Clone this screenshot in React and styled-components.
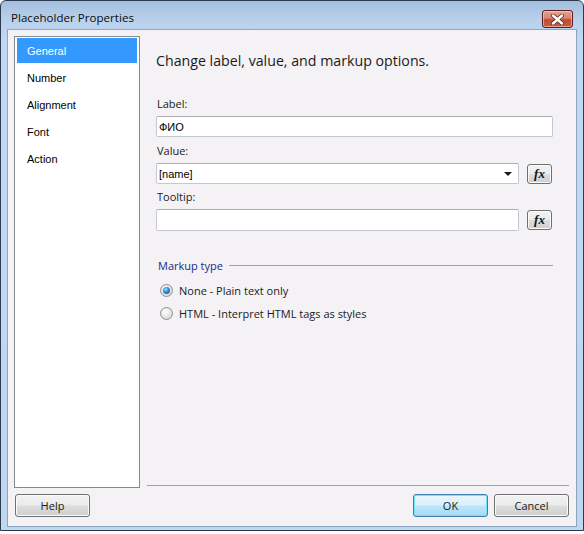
import React from "react";
import styled, { createGlobalStyle } from "styled-components";

const Global = createGlobalStyle`
  html, body { margin: 0; padding: 0; background: #ffffff; }
  body { width: 584px; height: 534px; overflow: hidden; font-family: "Liberation Sans", Arial, sans-serif; }
  * { box-sizing: border-box; }
`;

const Window = styled.div`
  width: 584px;
  height: 531px;
  border: 1px solid #2b3a4e;
  border-radius: 6px 6px 0 0;
  background: linear-gradient(180deg, #a3bfdd 0px, #b9d1ec 20px, #c1d8f1 40px, #c0d7f0 100%);
  display: flex;
  flex-direction: column;
  padding: 0 6px 3px 6px;
`;

const TitleBar = styled.div`
  height: 28px;
  display: flex;
  align-items: center;
  justify-content: space-between;
  padding: 2px 2px 0 4px;
`;

const Title = styled.div`
  font-family: "Open Sans", "Noto Sans", sans-serif;
  font-size: 11.5px;
  color: #0c0c0c;
  letter-spacing: 0.05px;
  margin-top: 3px;
`;

const CloseButton = styled.div`
  width: 31px;
  height: 18px;
  margin-top: 6px;
  margin-right: 2px;
  border: 1px solid #5a1d1d;
  border-radius: 3px;
  background: linear-gradient(180deg, #e6a497 0%, #d8826f 45%, #c24a32 55%, #c95d40 100%);
  box-shadow: inset 0 0 0 1px rgba(255, 220, 210, 0.55);
  display: flex;
  align-items: center;
  justify-content: center;
`;

const Client = styled.div`
  flex: 1;
  background: #f5f2f6;
  border: 1px solid #8fa6c0;
  display: grid;
  grid-template-columns: 126px 1fr;
  grid-template-rows: 1fr auto;
  column-gap: 7px;
  padding: 6px 7px 9px 6px;
`;

const NavList = styled.div`
  background: #ffffff;
  border: 1px solid #848990;
  display: flex;
  flex-direction: column;
  height: 452px;
`;

const NavItem = styled.div`
  height: 27px;
  margin: 0 1px;
  border: ${(p) => (p.$active ? "1px solid #ffffff" : "none")};
  display: flex;
  align-items: center;
  padding-left: ${(p) => (p.$active ? "10px" : "11px")};
  font-family: "Liberation Sans", Arial, sans-serif;
  font-size: 11px;
  color: ${(p) => (p.$active ? "#ffffff" : "#000000")};
  background: ${(p) => (p.$active ? "#3399ff" : "transparent")};
`;

const Content = styled.div`
  display: flex;
  flex-direction: column;
  border-bottom: 1px solid #a0a0a0;
  padding: 15px 16px 0 9px;
  height: 450px;
`;

const Heading = styled.div`
  font-family: "Open Sans", "Noto Sans", sans-serif;
  font-size: 14.2px;
  color: #1a1a1a;
  margin-bottom: 27px;
`;

const FieldLabel = styled.div`
  font-family: "Open Sans", "Noto Sans", sans-serif;
  font-size: 11px;
  color: #1a1a1a;
  margin: 0 0 5px 1px;
  line-height: 14px;
`;

const Row = styled.div`
  display: flex;
  align-items: center;
  gap: 8px;
  margin-bottom: ${(p) => p.$mb || 0}px;
`;

const TextBox = styled.div`
  flex: 1;
  height: ${(p) => p.$h || 21}px;
  background: #ffffff;
  border: 1px solid #c4c8cd;
  border-top-color: #abadb3;
  border-radius: 2px;
  display: flex;
  align-items: center;
  padding: 0 4px 0 2px;
  font-family: "Liberation Sans", Arial, sans-serif;
  font-size: 11px;
  color: #000;
  justify-content: space-between;
`;

const Arrow = styled.div`
  width: 0;
  height: 0;
  border-left: 4px solid transparent;
  border-right: 4px solid transparent;
  border-top: 4px solid #1a1a1a;
  margin-right: 2px;
`;

const FxButton = styled.div`
  width: 25px;
  height: 20px;
  border: 1px solid #707070;
  border-radius: 3px;
  background: linear-gradient(180deg, #f2f2f2 0%, #ebebeb 49%, #dddddd 51%, #cfcfcf 100%);
  box-shadow: inset 0 0 0 1px #fbfbfb;
  display: flex;
  align-items: center;
  justify-content: center;
  font-family: "Liberation Serif", "Times New Roman", serif;
  font-style: italic;
  font-weight: bold;
  font-size: 13px;
  color: #111;
  flex-shrink: 0;
  margin-right: 1px;
`;

const GroupHeader = styled.div`
  display: flex;
  align-items: center;
  gap: 6px;
  margin: 27px 0 9px 2px;
`;

const GroupTitle = styled.div`
  font-family: "Open Sans", "Noto Sans", sans-serif;
  font-size: 11px;
  color: #152a8a;
`;

const GroupLine = styled.div`
  flex: 1;
  height: 1px;
  background: #a0a0a6;
`;

const RadioRow = styled.div`
  display: flex;
  align-items: center;
  gap: 6px;
  margin-left: 4px;
  height: 17px;
  margin-bottom: 6px;
  font-family: "Open Sans", "Noto Sans", sans-serif;
  font-size: 11px;
  color: #1a1a1a;
`;

const Radio = styled.div`
  width: 13px;
  height: 13px;
  border-radius: 50%;
  border: 1px solid #8e8f8f;
  background: radial-gradient(circle at 40% 35%, #ffffff 0%, #e6e6e6 50%, #cfcfcf 100%);
  display: flex;
  align-items: center;
  justify-content: center;
  &::after {
    content: "";
    display: ${(p) => (p.$checked ? "block" : "none")};
    width: 7px;
    height: 7px;
    border-radius: 50%;
    background: radial-gradient(circle at 40% 35%, #9fe0ff 0%, #2a8ad4 45%, #0b4f8f 100%);
  }
`;

const Footer = styled.div`
  grid-column: 1 / 3;
  display: flex;
  align-items: center;
  justify-content: space-between;
  padding-top: 6px;
  padding-left: 1px;
`;

const Buttons = styled.div`
  display: flex;
  gap: 6px;
`;

const Button = styled.div`
  width: 75px;
  height: 23px;
  border: 1px solid ${(p) => (p.$default ? "#3c7fb1" : "#707070")};
  border-radius: 3px;
  background: ${(p) =>
    p.$default
      ? "linear-gradient(180deg, #eaf6fd 0%, #d9f0fc 49%, #bee6fd 51%, #a7d9f5 100%)"
      : "linear-gradient(180deg, #f2f2f2 0%, #ebebeb 49%, #dddddd 51%, #cfcfcf 100%)"};
  box-shadow: inset 0 0 0 1px ${(p) => (p.$default ? "#6ee3f9" : "#fbfbfb")};
  display: flex;
  align-items: center;
  justify-content: center;
  font-family: "Open Sans", "Noto Sans", sans-serif;
  font-size: 11px;
  color: #1a1a1a;
`;

export default function App() {
  const nav = ["General", "Number", "Alignment", "Font", "Action"];
  return (
    <>
      <Global />
      <Window>
        <TitleBar>
          <Title>Placeholder Properties</Title>
          <CloseButton>
            <svg width="13" height="11" viewBox="0 0 13 11">
              <path
                d="M2 1.5 L11 9.5 M11 1.5 L2 9.5"
                stroke="#5a2a22"
                strokeWidth="4"
                strokeLinecap="round"
              />
              <path
                d="M2 1.5 L11 9.5 M11 1.5 L2 9.5"
                stroke="#ffffff"
                strokeWidth="2.4"
                strokeLinecap="round"
              />
            </svg>
          </CloseButton>
        </TitleBar>
        <Client>
          <NavList>
            {nav.map((n, i) => (
              <NavItem key={n} $active={i === 0}>
                {n}
              </NavItem>
            ))}
          </NavList>
          <Content>
            <Heading>Change label, value, and markup options.</Heading>
            <FieldLabel>Label:</FieldLabel>
            <Row $mb={7}>
              <TextBox>ФИО</TextBox>
            </Row>
            <FieldLabel>Value:</FieldLabel>
            <Row $mb={6}>
              <TextBox>
                [name]
                <Arrow />
              </TextBox>
              <FxButton>fx</FxButton>
            </Row>
            <FieldLabel>Tooltip:</FieldLabel>
            <Row>
              <TextBox $h={22} />
              <FxButton>fx</FxButton>
            </Row>
            <GroupHeader>
              <GroupTitle>Markup type</GroupTitle>
              <GroupLine />
            </GroupHeader>
            <RadioRow>
              <Radio $checked />
              None - Plain text only
            </RadioRow>
            <RadioRow>
              <Radio />
              HTML - Interpret HTML tags as styles
            </RadioRow>
          </Content>
          <Footer>
            <Button>Help</Button>
            <Buttons>
              <Button $default>OK</Button>
              <Button>Cancel</Button>
            </Buttons>
          </Footer>
        </Client>
      </Window>
    </>
  );
}
